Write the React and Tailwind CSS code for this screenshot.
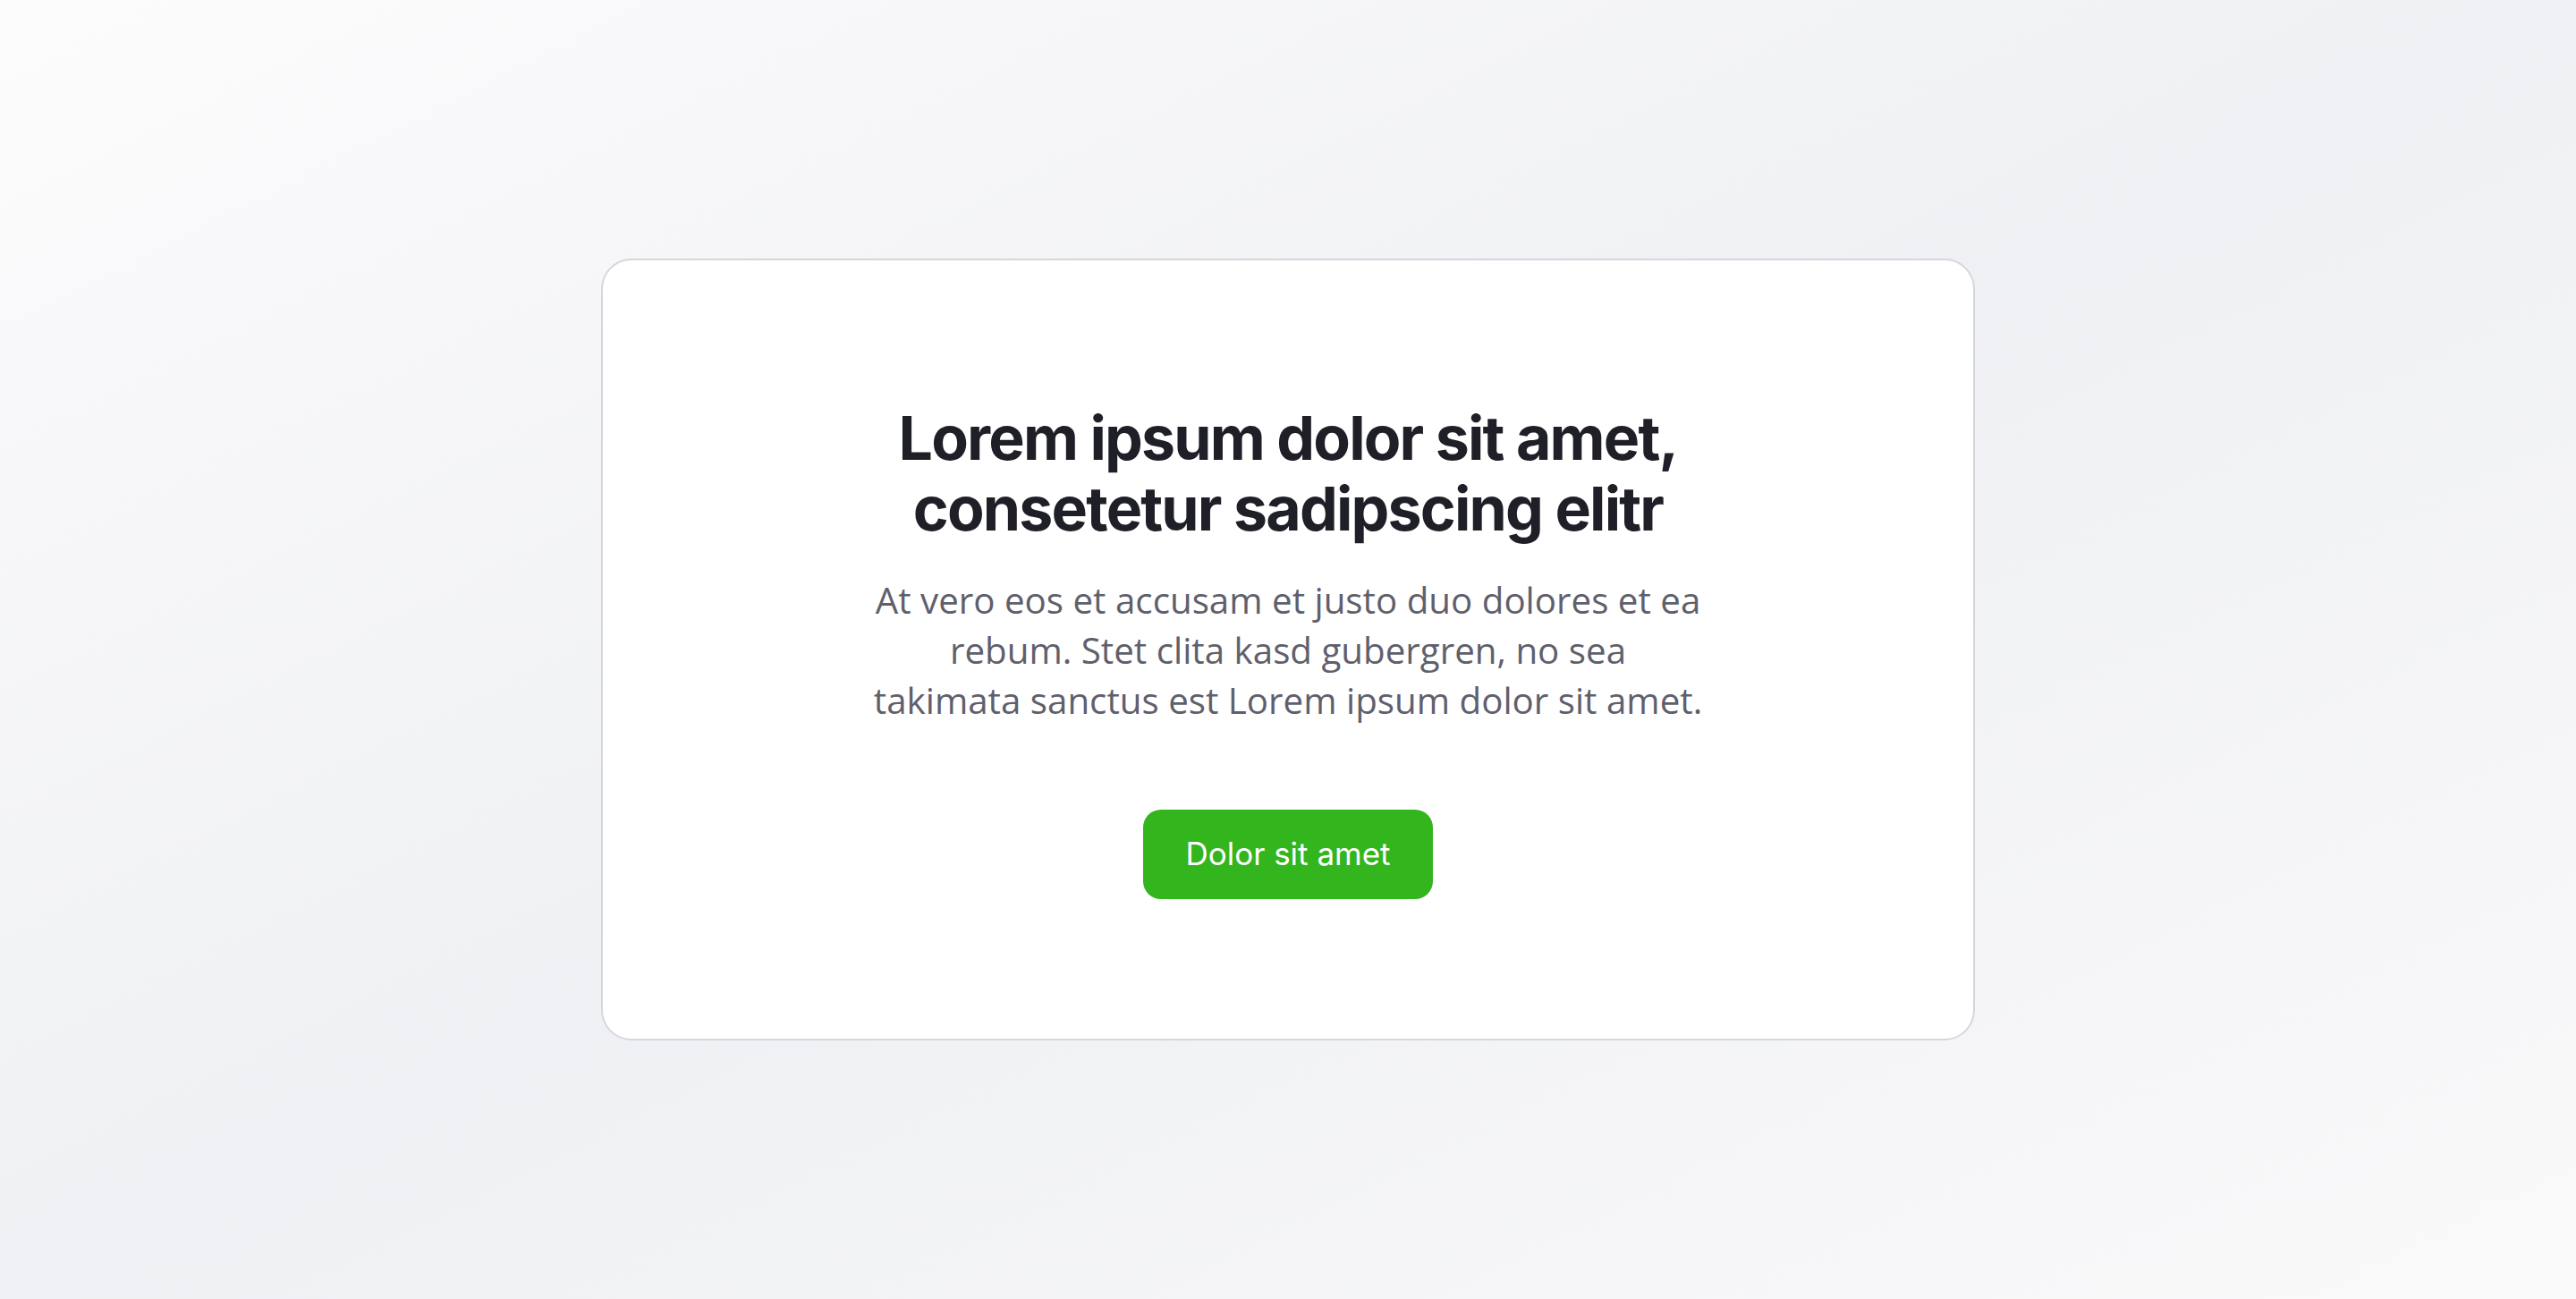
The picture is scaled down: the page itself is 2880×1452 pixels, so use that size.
export default function App() {
  return (
    <div className="min-h-screen w-full flex items-center justify-center bg-linear-to-br from-[#fcfcfd] via-[#eff0f3] to-[#fafafb]">
      <div className="w-[1536px] h-[874px] pt-[2px] bg-white border-2 border-[#d6d7de] rounded-[34px] flex flex-col items-center justify-center">
        <h1 className="text-[68px] leading-[79px] font-bold tracking-[-0.027em] text-[#1f2027] text-center font-['Inter',sans-serif]">
          Lorem ipsum dolor sit amet,
          <br />
          consetetur sadipscing elitr
        </h1>
        <p className="mt-[35px] text-[40.3px] leading-[56px] text-[#5f606c] text-center font-['Open_Sans',sans-serif]">
          At vero eos et accusam et justo duo dolores et ea
          <br />
          rebum. Stet clita kasd gubergren, no sea
          <br />
          takimata sanctus est Lorem ipsum dolor sit amet.
        </p>
        <button className="mt-[94px] h-[100px] px-[47px] rounded-[20px] bg-[#33b51d] text-white text-[35px] font-normal font-['Inter',sans-serif]">
          Dolor sit amet
        </button>
      </div>
    </div>
  );
}
